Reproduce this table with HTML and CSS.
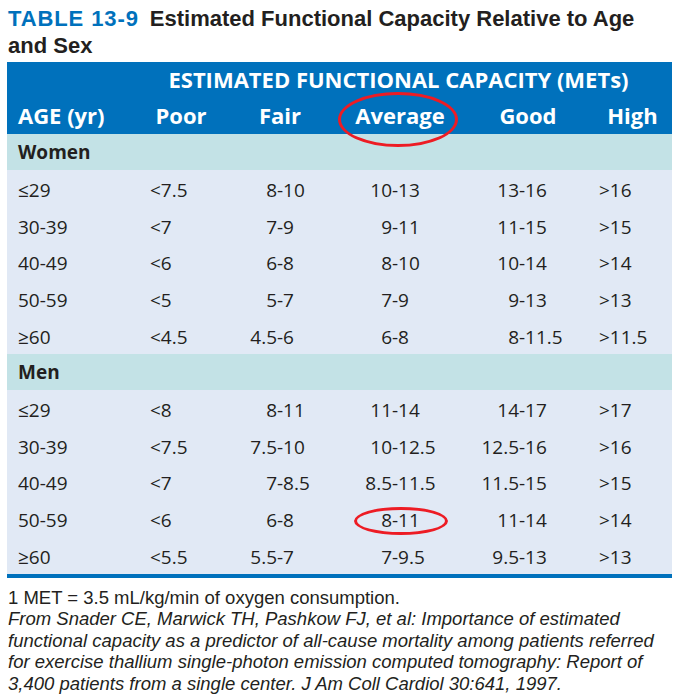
FILE: index.html
```html
<!DOCTYPE html>
<html lang="en">
<head>
<meta charset="utf-8">
<title>Table 13-9</title>
<link rel="stylesheet" href="styles.css">
</head>
<body>
<div class="page">
  <h1 class="title"><span class="tnum">TABLE 13-9</span>Estimated Functional Capacity Relative to Age<br>and Sex</h1>
  <div class="tbl">
    <div class="head">
      <div class="grid super"><div class="supertext">ESTIMATED FUNCTIONAL CAPACITY (METs)</div></div>
      <div class="grid cols">
        <div class="hage">AGE (yr)</div>
        <div>Poor</div>
        <div>Fair</div>
        <div class="ringcell">Average<span class="ring ring-head"></span></div>
        <div>Good</div>
        <div class="hhigh">High</div>
      </div>
    </div>

    <div class="band">Women</div>
    <div class="grid row"><div class="age">≤29</div><div class="poor">&lt;7.5</div><div class="rng fair"><span class="a">8</span>-10</div><div class="rng avg"><span class="a">10</span>-13</div><div class="rng good"><span class="a">13</span>-16</div><div class="high">&gt;16</div></div>
    <div class="grid row"><div class="age">30-39</div><div class="poor">&lt;7</div><div class="rng fair"><span class="a">7</span>-9</div><div class="rng avg"><span class="a">9</span>-11</div><div class="rng good"><span class="a">11</span>-15</div><div class="high">&gt;15</div></div>
    <div class="grid row"><div class="age">40-49</div><div class="poor">&lt;6</div><div class="rng fair"><span class="a">6</span>-8</div><div class="rng avg"><span class="a">8</span>-10</div><div class="rng good"><span class="a">10</span>-14</div><div class="high">&gt;14</div></div>
    <div class="grid row"><div class="age">50-59</div><div class="poor">&lt;5</div><div class="rng fair"><span class="a">5</span>-7</div><div class="rng avg"><span class="a">7</span>-9</div><div class="rng good"><span class="a">9</span>-13</div><div class="high">&gt;13</div></div>
    <div class="grid row"><div class="age">≥60</div><div class="poor">&lt;4.5</div><div class="rng fair"><span class="a">4.5</span>-6</div><div class="rng avg"><span class="a">6</span>-8</div><div class="rng good"><span class="a">8</span>-11.5</div><div class="high">&gt;11.5</div></div>

    <div class="band">Men</div>
    <div class="grid row"><div class="age">≤29</div><div class="poor">&lt;8</div><div class="rng fair"><span class="a">8</span>-11</div><div class="rng avg"><span class="a">11</span>-14</div><div class="rng good"><span class="a">14</span>-17</div><div class="high">&gt;17</div></div>
    <div class="grid row"><div class="age">30-39</div><div class="poor">&lt;7.5</div><div class="rng fair"><span class="a">7.5</span>-10</div><div class="rng avg"><span class="a">10</span>-12.5</div><div class="rng good"><span class="a">12.5</span>-16</div><div class="high">&gt;16</div></div>
    <div class="grid row"><div class="age">40-49</div><div class="poor">&lt;7</div><div class="rng fair"><span class="a">7</span>-8.5</div><div class="rng avg"><span class="a">8.5</span>-11.5</div><div class="rng good"><span class="a">11.5</span>-15</div><div class="high">&gt;15</div></div>
    <div class="grid row"><div class="age">50-59</div><div class="poor">&lt;6</div><div class="rng fair"><span class="a">6</span>-8</div><div class="rng avg ringcell"><span class="a">8</span>-11<span class="ring ring-cell"></span></div><div class="rng good"><span class="a">11</span>-14</div><div class="high">&gt;14</div></div>
    <div class="grid row"><div class="age">≥60</div><div class="poor">&lt;5.5</div><div class="rng fair"><span class="a">5.5</span>-7</div><div class="rng avg"><span class="a">7</span>-9.5</div><div class="rng good"><span class="a">9.5</span>-13</div><div class="high">&gt;13</div></div>
  </div>

  <p class="foot">1 MET = 3.5 mL/kg/min of oxygen consumption.<br>
  <em>From Snader CE, Marwick TH, Pashkow FJ, et al: Importance of estimated<br>functional capacity as a predictor of all-cause mortality among patients referred<br>for exercise thallium single-photon emission computed tomography: Report of<br>3,400 patients from a single center. J Am Coll Cardiol 30:641, 1997.</em></p>
</div>
</body>
</html>
```

FILE: styles.css
```css
* { box-sizing: border-box; margin: 0; padding: 0; }

body {
  background: #ffffff;
  color: #231f20;
  font-family: "Open Sans", "DejaVu Sans", sans-serif;
}

.page {
  width: 681px;
  padding: 5px 9px 0 7px;
}

.title {
  font-family: "Liberation Sans", Arial, sans-serif;
  font-weight: 700;
  font-size: 22px;
  line-height: 27px;
  padding-left: 1px;
  color: #231f20;
}

.tnum {
  color: #0071bc;
  letter-spacing: 0.9px;
  margin-right: 11px;
}

.tbl {
  margin-top: 3px;
  width: 665px;
  background: #e1e9f5;
  border-bottom: 4px solid #0071bc;
}

.grid {
  display: grid;
  grid-template-columns: 128px 92px 106px 134px 122px 83px;
  align-items: center;
}

.head {
  background: #0071bc;
  color: #ffffff;
  font-weight: 700;
  font-size: 22px;
}

.super,
.cols {
  height: 36px;
  line-height: 34px;
  align-items: stretch;
}

.supertext {
  grid-column: 2 / 7;
  text-align: center;
  padding-right: 10px;
}

.cols { text-align: center; }
.hage { text-align: left; padding-left: 11px; }
.hhigh { padding-left: 4px; }

.band {
  height: 36px;
  background: #c3e2e6;
  font-weight: 700;
  font-size: 19px;
  line-height: 36px;
  padding-left: 11px;
}

.row {
  height: 36.8px;
  font-size: 19px;
  padding-top: 3px;
}

.age { padding-left: 11px; }
.poor { padding-left: 15px; }
.high { padding-left: 10px; }

.rng .a { display: inline-block; text-align: right; }
.fair .a { width: 50px; }
.avg .a { width: 59px; }
.good .a { width: 52px; }

.ringcell { position: relative; }

.ring {
  position: absolute;
  border: 3px solid #ed1c24;
  border-radius: 50%;
  pointer-events: none;
}

.ring-head { left: 5px; top: -6px; width: 120px; height: 55px; }
.ring-cell { left: 21px; top: 0; width: 94px; height: 28px; }

.foot {
  margin-top: 9px;
  font-family: "Liberation Sans", Arial, sans-serif;
  font-size: 18.5px;
  line-height: 21.5px;
  padding-left: 1px;
}

.foot em { font-style: italic; }
```
